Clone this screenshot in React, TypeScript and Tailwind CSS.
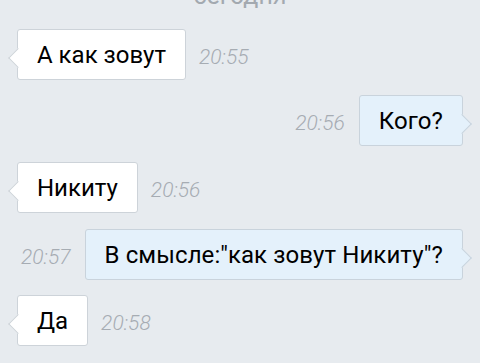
import React from "react";

const font = { fontFamily: "Roboto, 'Noto Sans', sans-serif" };

function In({ text, time }: { text: string; time: string }) {
  return (
    <div className="flex items-center pl-[17px]">
      <div className="relative h-[51px] flex items-center px-[19px] bg-white border border-[#cdd3d9] rounded-[3px] text-[24px] text-black">
        <div className="absolute left-[-7px] top-[21px] w-[14px] h-[14px] rotate-45 bg-white border-l border-b border-[#cdd3d9]" />
        <span className="relative">{text}</span>
      </div>
      <span className="ml-[13px] mt-[7px] text-[21px] italic font-light text-[#a6acb3]">{time}</span>
    </div>
  );
}

function Out({ text, time }: { text: string; time: string }) {
  return (
    <div className="flex items-center justify-end pr-[17px]">
      <span className="mr-[14px] mt-[7px] text-[21px] italic font-light text-[#a6acb3]">{time}</span>
      <div className="relative h-[51px] flex items-center px-[19px] bg-[#e4f1fb] border border-[#c9d3dc] rounded-[3px] text-[24px] tracking-[0.1px] text-black">
        <div className="absolute right-[-7px] top-[21px] w-[14px] h-[14px] rotate-45 bg-[#e4f1fb] border-t border-r border-[#c9d3dc]" />
        <span className="relative">{text}</span>
      </div>
    </div>
  );
}

export default function App() {
  return (
    <div
      className="w-[480px] h-[363px] overflow-hidden bg-[#e7ebef] flex flex-col"
      style={font}
    >
      <div className="mt-[-19px] h-[30px] text-center text-[25px] leading-[30px] text-[#a3a9b0]">
        сегодня
      </div>
      <div className="mt-[18px] flex flex-col">
        <In text="А как зовут" time="20:55" />
        <div className="h-[15px]" />
        <Out text="Кого?" time="20:56" />
        <div className="h-[16px]" />
        <In text="Никиту" time="20:56" />
        <div className="h-[16px]" />
        <Out text={'В смысле:"как зовут Никиту"?'} time="20:57" />
        <div className="h-[15px]" />
        <In text="Да" time="20:58" />
      </div>
    </div>
  );
}
